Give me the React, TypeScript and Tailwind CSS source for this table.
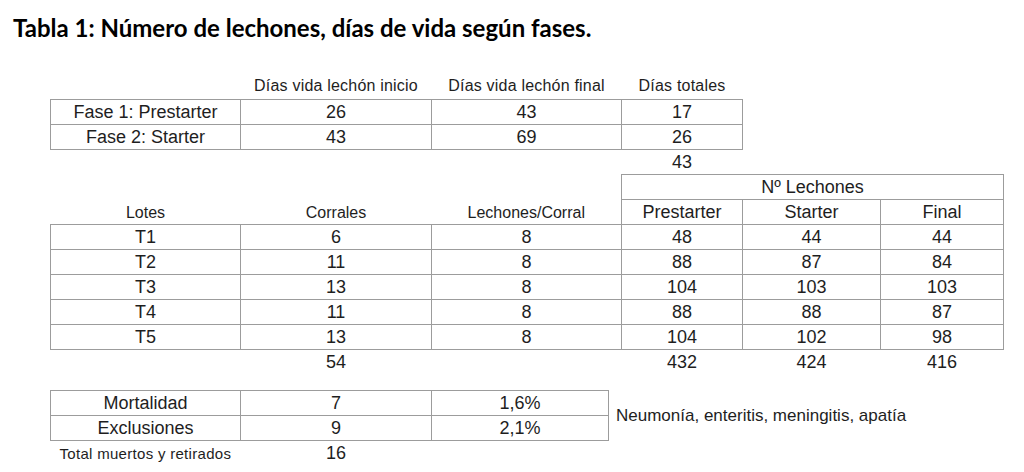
const cellBorder = 'border-[1.5px] border-[#9c9c9c]';

type Row = { label: string; corrales: string; porCorral: string; pre: string; starter: string; final: string };

const lotes: Row[] = [
  { label: 'T1', corrales: '6', porCorral: '8', pre: '48', starter: '44', final: '44' },
  { label: 'T2', corrales: '11', porCorral: '8', pre: '88', starter: '87', final: '84' },
  { label: 'T3', corrales: '13', porCorral: '8', pre: '104', starter: '103', final: '103' },
  { label: 'T4', corrales: '11', porCorral: '8', pre: '88', starter: '88', final: '87' },
  { label: 'T5', corrales: '13', porCorral: '8', pre: '104', starter: '102', final: '98' },
];

const fases = [
  { fase: 'Fase 1: Prestarter', inicio: '26', final: '43', total: '17' },
  { fase: 'Fase 2: Starter', inicio: '43', final: '69', total: '26' },
];

export default function App() {
  return (
    <div
      className="w-[1024px] h-[472px] overflow-hidden bg-white text-[#1e1e1e]"
      style={{ fontFamily: '"Liberation Sans", Arial, sans-serif' }}
    >
      <h1
        className="pl-[13px] pt-[14px] text-[24px] leading-[28px] font-bold text-black"
        style={{ fontFamily: 'Lato, "Liberation Sans", sans-serif' }}
      >
        Tabla 1: Número de lechones, días de vida según fases.
      </h1>

      <table className="ml-[50px] mt-[32px] border-collapse table-fixed text-[18px] leading-none">
        <colgroup>
          <col className="w-[190px]" />
          <col className="w-[191px]" />
          <col className="w-[190px]" />
          <col className="w-[121px]" />
          <col className="w-[138px]" />
          <col className="w-[123px]" />
        </colgroup>
        <tbody>
          {/* cabecera fases */}
          <tr className="h-[25px] text-[16px] text-center">
            <td></td>
            <td className="tracking-[0.2px]">Días vida lechón inicio</td>
            <td className="tracking-[0.2px]">Días vida lechón final</td>
            <td className="tracking-[0.2px]">Días totales</td>
            <td></td>
            <td></td>
          </tr>
          {fases.map((f) => (
            <tr key={f.fase} className="h-[25px] text-center">
              <td className={cellBorder}>{f.fase}</td>
              <td className={cellBorder}>{f.inicio}</td>
              <td className={cellBorder}>{f.final}</td>
              <td className={cellBorder}>{f.total}</td>
              <td></td>
              <td></td>
            </tr>
          ))}
          <tr className="h-[25px] text-center">
            <td></td>
            <td></td>
            <td></td>
            <td>43</td>
            <td></td>
            <td></td>
          </tr>

          {/* lechones por lote */}
          <tr className="h-[25px] text-center">
            <td></td>
            <td></td>
            <td></td>
            <td colSpan={3} className={cellBorder}>
              Nº Lechones
            </td>
          </tr>
          <tr className="h-[25px] text-center">
            <td className="text-[16px] align-bottom pb-[3px]">Lotes</td>
            <td className="text-[16px] align-bottom pb-[3px]">Corrales</td>
            <td className="text-[16px] align-bottom pb-[3px]">Lechones/Corral</td>
            <td className={cellBorder}>Prestarter</td>
            <td className={cellBorder}>Starter</td>
            <td className={cellBorder}>Final</td>
          </tr>
          {lotes.map((r) => (
            <tr key={r.label} className="h-[25px] text-center">
              <td className={cellBorder}>{r.label}</td>
              <td className={cellBorder}>{r.corrales}</td>
              <td className={cellBorder}>{r.porCorral}</td>
              <td className={cellBorder}>{r.pre}</td>
              <td className={cellBorder}>{r.starter}</td>
              <td className={cellBorder}>{r.final}</td>
            </tr>
          ))}
          <tr className="h-[25px] text-center">
            <td></td>
            <td>54</td>
            <td></td>
            <td>432</td>
            <td>424</td>
            <td>416</td>
          </tr>
        </tbody>
      </table>

      {/* bajas */}
      <table className="ml-[50px] mt-[16px] border-collapse table-fixed text-[18px] leading-none">
        <colgroup>
          <col className="w-[190px]" />
          <col className="w-[191px]" />
          <col className="w-[177px]" />
          <col className="w-[400px]" />
        </colgroup>
        <tbody>
          <tr className="h-[25px] text-center">
            <td className={cellBorder}>Mortalidad</td>
            <td className={cellBorder}>7</td>
            <td className={cellBorder}>1,6%</td>
            <td rowSpan={2} className="text-left pl-[7px] text-[17px]">
              Neumonía, enteritis, meningitis, apatía
            </td>
          </tr>
          <tr className="h-[25px] text-center">
            <td className={cellBorder}>Exclusiones</td>
            <td className={cellBorder}>9</td>
            <td className={cellBorder}>2,1%</td>
          </tr>
          <tr className="h-[25px]">
            <td className="text-left pl-[9px] text-[15px] tracking-[0.3px]">Total muertos y retirados</td>
            <td className="text-center">16</td>
            <td></td>
            <td></td>
          </tr>
        </tbody>
      </table>
    </div>
  );
}
